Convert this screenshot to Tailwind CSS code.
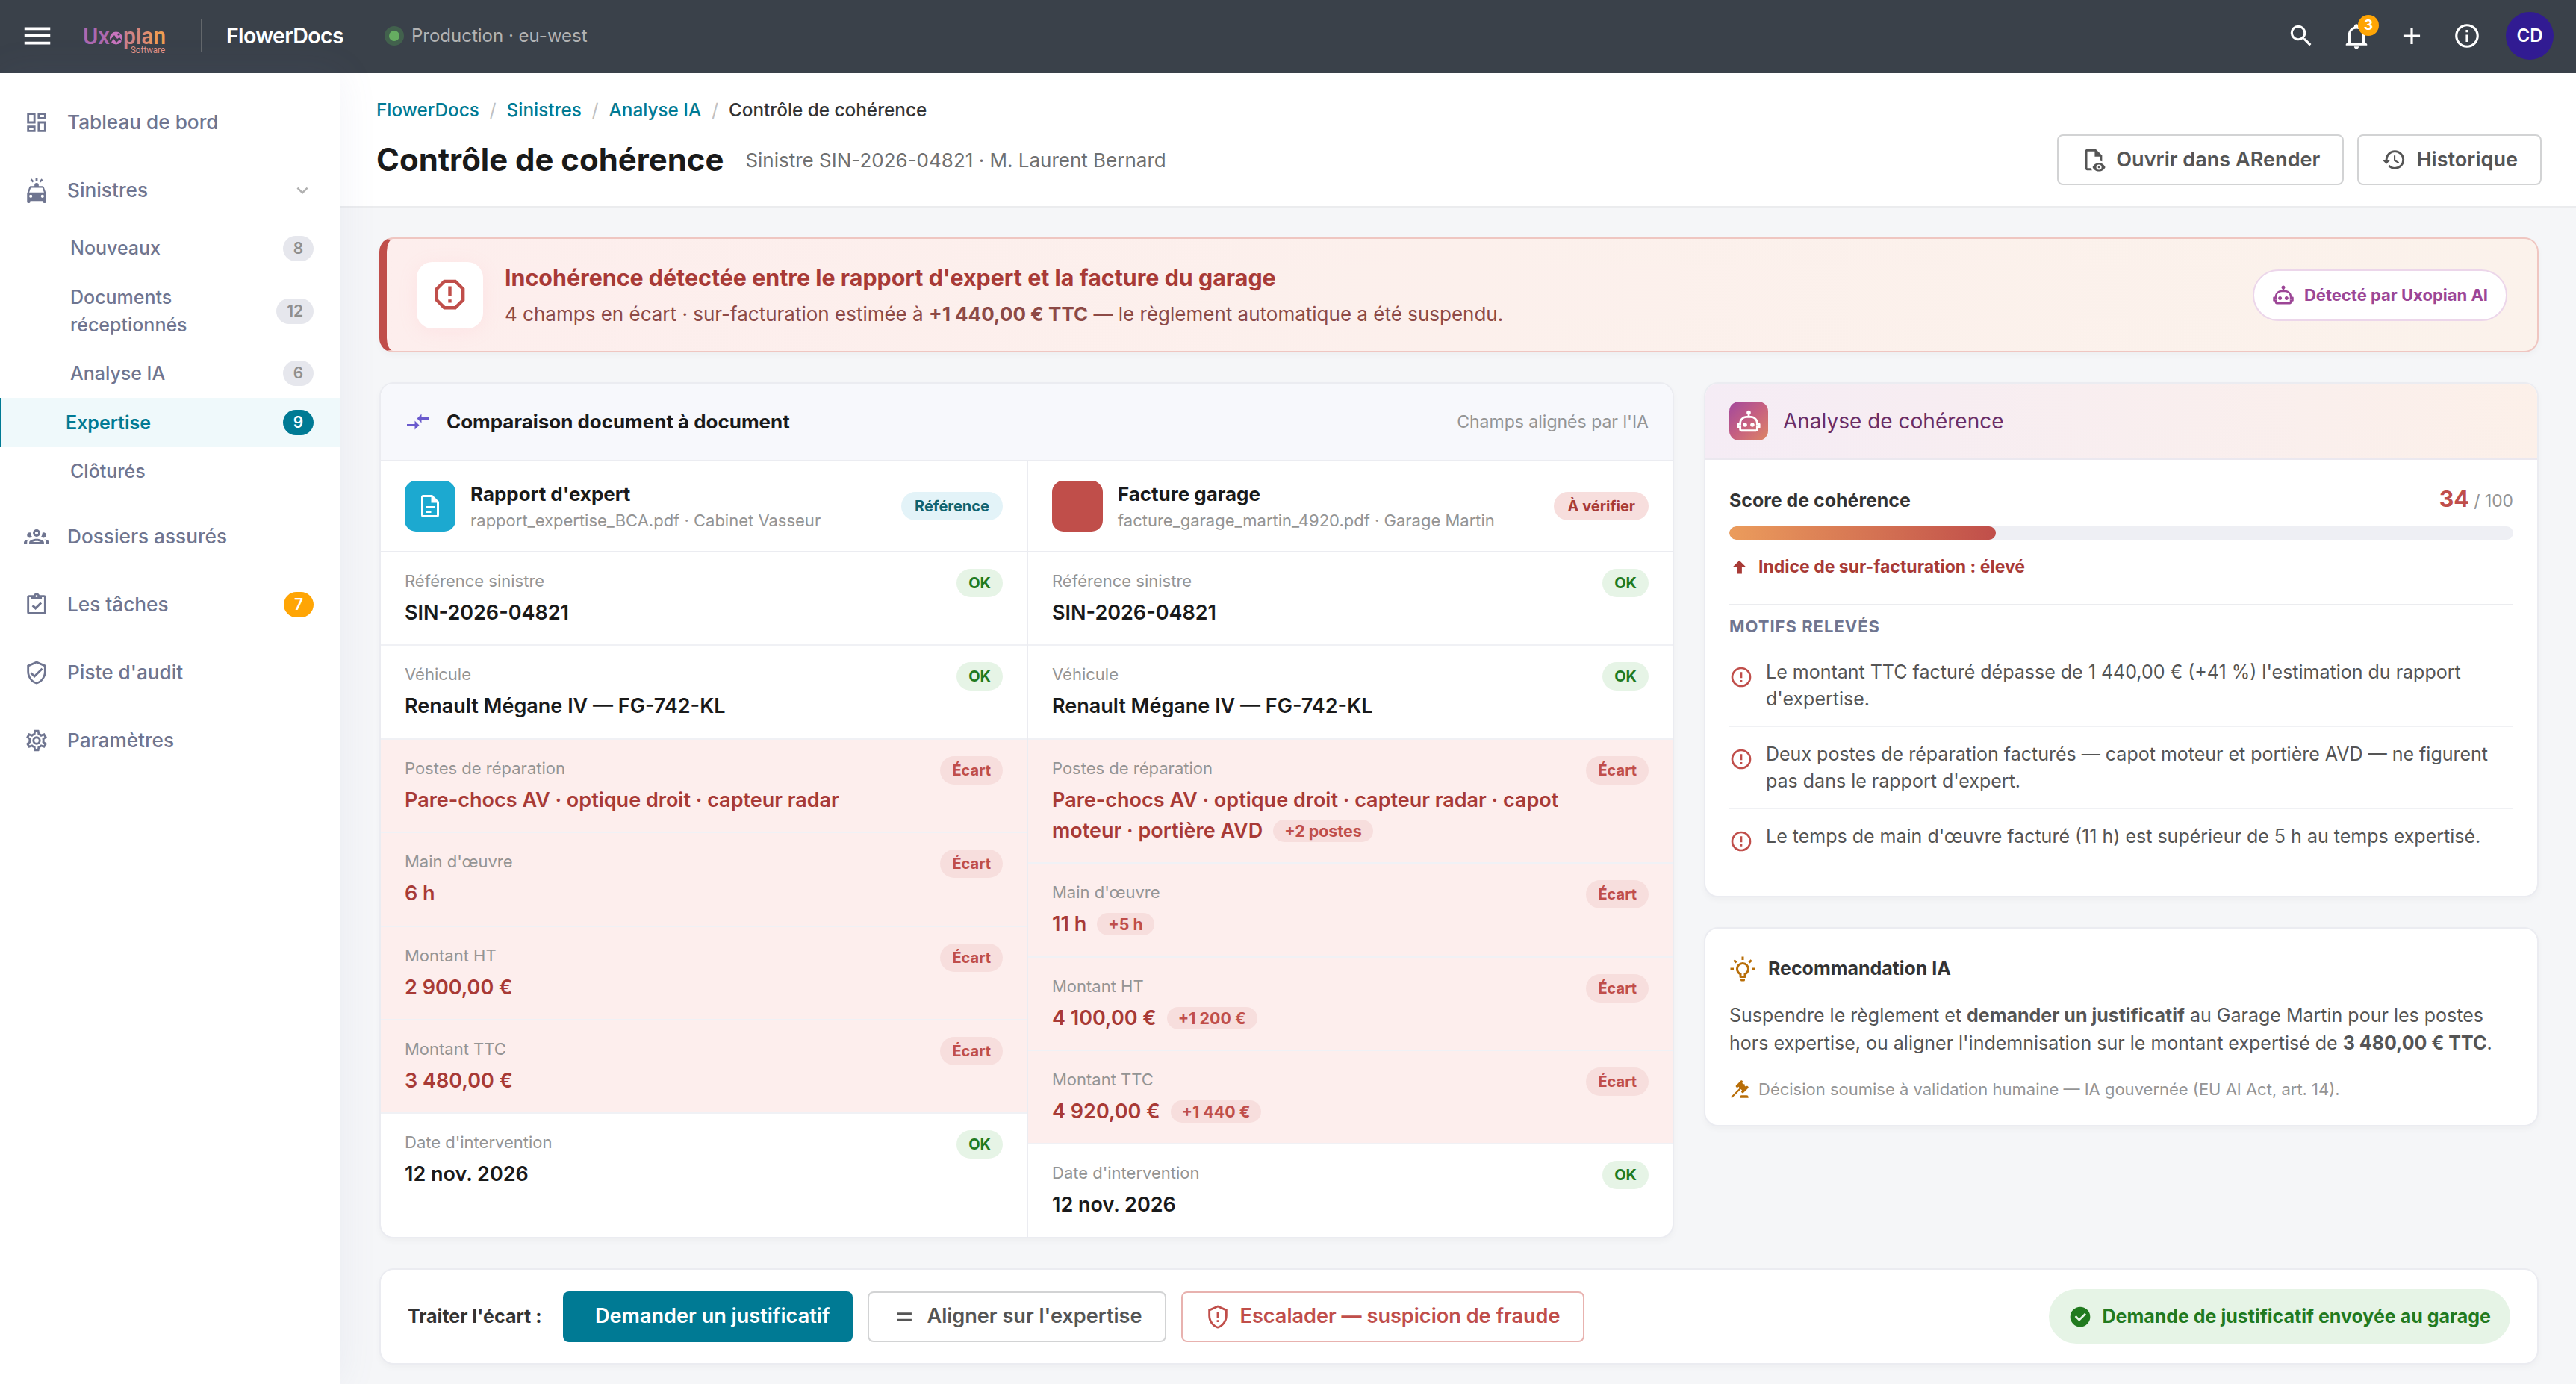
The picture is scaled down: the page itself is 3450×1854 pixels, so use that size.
<!DOCTYPE html>
<html lang="fr">
<head>
    <meta charset="UTF-8">
    <meta name="viewport" content="width=device-width, initial-scale=1.0">
    <title>Contrôle de cohérence - FlowerDocs</title>
    <script src="https://cdn.jsdelivr.net/npm/@tailwindcss/browser@4"></script>
</head>
<body class="h-[1854px] overflow-hidden bg-[#f5f6f8] font-['Inter',sans-serif] text-[24.7px] text-[#1a1a1a] antialiased">

    <!-- Icônes partagées -->
    <svg class="hidden">
        <symbol id="menu" viewBox="0 0 24 24"><path d="M3,6H21V8H3V6M3,11H21V13H3V11M3,16H21V18H3V16Z"/></symbol>
        <symbol id="magnify" viewBox="0 0 24 24"><path d="M9.5,3A6.5,6.5 0 0,1 16,9.5C16,11.11 15.41,12.59 14.44,13.73L14.71,14H15.5L20.5,19L19,20.5L14,15.5V14.71L13.73,14.44C12.59,15.41 11.11,16 9.5,16A6.5,6.5 0 0,1 3,9.5A6.5,6.5 0 0,1 9.5,3M9.5,5C7,5 5,7 5,9.5C5,12 7,14 9.5,14C12,14 14,12 14,9.5C14,7 12,5 9.5,5Z"/></symbol>
        <symbol id="bell" viewBox="0 0 24 24"><path d="M10 21H14C14 22.1 13.1 23 12 23S10 22.1 10 21M21 19V20H3V19L5 17V11C5 7.9 7 5.2 10 4.3V4C10 2.9 10.9 2 12 2S14 2.9 14 4V4.3C17 5.2 19 7.9 19 11V17L21 19M17 11C17 8.2 14.8 6 12 6S7 8.2 7 11V18H17V11Z"/></symbol>
        <symbol id="plus" viewBox="0 0 24 24"><path d="M19,13H13V19H11V13H5V11H11V5H13V11H19V13Z"/></symbol>
        <symbol id="info" viewBox="0 0 24 24"><path d="M11,9H13V7H11M12,20C7.59,20 4,16.41 4,12C4,7.59 7.59,4 12,4C16.41,4 20,7.59 20,12C20,16.41 16.41,20 12,20M12,2A10,10 0 0,0 2,12A10,10 0 0,0 12,22A10,10 0 0,0 22,12A10,10 0 0,0 12,2M11,17H13V11H11V17Z"/></symbol>
        <symbol id="dashboard" viewBox="0 0 24 24"><path d="M19,5V7H15V5H19M9,5V11H5V5H9M19,13V19H15V13H19M9,17V19H5V17H9M21,3H13V9H21V3M11,3H3V13H11V3M21,11H13V21H21V11M11,15H3V21H11V15Z"/></symbol>
        <symbol id="car" viewBox="0 0 24 24"><path fill-rule="evenodd" d="M18.92,9C18.72,8.42 18.16,8 17.5,8H14V7A2,2 0 0,0 10,7V8H6.5C5.84,8 5.28,8.42 5.08,9L3,15V23A1,1 0 0,0 4,24H5A1,1 0 0,0 6,23V22H18V23A1,1 0 0,0 19,24H20A1,1 0 0,0 21,23V15L18.92,9M6.5,19A1.5,1.5 0 0,1 5,17.5A1.5,1.5 0 0,1 6.5,16A1.5,1.5 0 0,1 8,17.5A1.5,1.5 0 0,1 6.5,19M17.5,19A1.5,1.5 0 0,1 16,17.5A1.5,1.5 0 0,1 17.5,16A1.5,1.5 0 0,1 19,17.5A1.5,1.5 0 0,1 17.5,19M5,14L6.5,9.5H17.5L19,14H5M11,0H13V3H11V0M7.2,0.9L9.4,3.1L8.3,4.6L6.1,2.4L7.2,0.9M16.8,0.9L17.9,2.4L15.7,4.6L14.6,3.1L16.8,0.9Z"/></symbol>
        <symbol id="group" viewBox="0 0 24 24"><path d="M12,5A3.5,3.5 0 0,0 8.5,8.5A3.5,3.5 0 0,0 12,12A3.5,3.5 0 0,0 15.5,8.5A3.5,3.5 0 0,0 12,5M12,7A1.5,1.5 0 0,1 13.5,8.5A1.5,1.5 0 0,1 12,10A1.5,1.5 0 0,1 10.5,8.5A1.5,1.5 0 0,1 12,7M5.5,8A2.5,2.5 0 0,0 3,10.5C3,11.44 3.53,12.25 4.29,12.68C4.65,12.88 5.06,13 5.5,13C5.94,13 6.35,12.88 6.71,12.68C7.08,12.47 7.39,12.17 7.62,11.81C6.89,10.86 6.5,9.7 6.5,8.5C6.5,8.41 6.5,8.31 6.5,8.22C6.2,8.08 5.86,8 5.5,8M18.5,8C18.14,8 17.8,8.08 17.5,8.22C17.5,8.31 17.5,8.41 17.5,8.5C17.5,9.7 17.11,10.86 16.38,11.81C16.5,12 16.63,12.15 16.78,12.3C16.94,12.45 17.1,12.58 17.29,12.68C17.65,12.88 18.06,13 18.5,13C18.94,13 19.35,12.88 19.71,12.68C20.47,12.25 21,11.44 21,10.5A2.5,2.5 0 0,0 18.5,8M12,14C9.66,14 5,15.17 5,17.5V19H19V17.5C19,15.17 14.34,14 12,14M4.71,14.55C2.78,14.78 0,15.76 0,17.5V19H3V17.07C3,16.06 3.69,15.22 4.71,14.55M19.29,14.55C20.31,15.22 21,16.06 21,17.07V19H24V17.5C24,15.76 21.22,14.78 19.29,14.55M12,16C13.53,16 15.24,16.5 16.23,17H7.77C8.76,16.5 10.47,16 12,16Z"/></symbol>
        <symbol id="clipboard" viewBox="0 0 24 24"><path d="M19,3H14.82C14.4,1.84 13.3,1 12,1C10.7,1 9.6,1.84 9.18,3H5A2,2 0 0,0 3,5V19A2,2 0 0,0 5,21H19A2,2 0 0,0 21,19V5A2,2 0 0,0 19,3M12,3A1,1 0 0,1 13,4A1,1 0 0,1 12,5A1,1 0 0,1 11,4A1,1 0 0,1 12,3M7,7H17V5H19V19H5V5H7V7M7.5,13.5L9,12L11,14L15.5,9.5L17,11L11,17L7.5,13.5Z"/></symbol>
        <symbol id="shield-check" viewBox="0 0 24 24"><path d="M21,11C21,16.55 17.16,21.74 12,23C6.84,21.74 3,16.55 3,11V5L12,1L21,5V11M12,21C15.75,20 19,15.54 19,11.22V6.3L12,3.18L5,6.3V11.22C5,15.54 8.25,20 12,21M10,17L6,13L7.41,11.59L10,14.17L16.59,7.58L18,9"/></symbol>
        <symbol id="cog" viewBox="0 0 24 24"><path d="M12,8A4,4 0 0,1 16,12A4,4 0 0,1 12,16A4,4 0 0,1 8,12A4,4 0 0,1 12,8M12,10A2,2 0 0,0 10,12A2,2 0 0,0 12,14A2,2 0 0,0 14,12A2,2 0 0,0 12,10M10,22C9.75,22 9.54,21.82 9.5,21.58L9.13,18.93C8.5,18.68 7.96,18.34 7.44,17.94L4.95,18.95C4.73,19.03 4.46,18.95 4.34,18.73L2.34,15.27C2.21,15.05 2.27,14.78 2.46,14.63L4.57,12.97L4.5,12L4.57,11L2.46,9.37C2.27,9.22 2.21,8.95 2.34,8.73L4.34,5.27C4.46,5.05 4.73,4.96 4.95,5.05L7.44,6.05C7.96,5.66 8.5,5.32 9.13,5.07L9.5,2.42C9.54,2.18 9.75,2 10,2H14C14.25,2 14.46,2.18 14.5,2.42L14.87,5.07C15.5,5.32 16.04,5.66 16.56,6.05L19.05,5.05C19.27,4.96 19.54,5.05 19.66,5.27L21.66,8.73C21.79,8.95 21.73,9.22 21.54,9.37L19.43,11L19.5,12L19.43,13L21.54,14.63C21.73,14.78 21.79,15.05 21.66,15.27L19.66,18.73C19.54,18.95 19.27,19.04 19.05,18.95L16.56,17.95C16.04,18.34 15.5,18.68 14.87,18.93L14.5,21.58C14.46,21.82 14.25,22 14,22H10M11.25,4L10.88,6.61C9.68,6.86 8.62,7.5 7.85,8.39L5.44,7.35L4.69,8.65L6.8,10.2C6.4,11.37 6.4,12.64 6.8,13.8L4.68,15.36L5.43,16.66L7.86,15.62C8.63,16.5 9.68,17.14 10.87,17.38L11.24,20H12.76L13.13,17.39C14.32,17.14 15.37,16.5 16.14,15.62L18.57,16.66L19.32,15.36L17.2,13.81C17.6,12.64 17.6,11.37 17.2,10.2L19.31,8.65L18.56,7.35L16.15,8.39C15.38,7.5 14.32,6.86 13.12,6.62L12.75,4H11.25Z"/></symbol>
        <symbol id="chevron" viewBox="0 0 24 24"><path d="M7.41,8.58L12,13.17L16.59,8.58L18,10L12,16L6,10L7.41,8.58Z"/></symbol>
        <symbol id="file-eye" viewBox="0 0 24 24"><path d="M17,18C17.56,18 18,18.44 18,19C18,19.56 17.56,20 17,20C16.44,20 16,19.56 16,19C16,18.44 16.44,18 17,18M17,15C14.27,15 11.94,16.66 11,19C11.94,21.34 14.27,23 17,23C19.73,23 22.06,21.34 23,19C22.06,16.66 19.73,15 17,15M17,21.5A2.5,2.5 0 0,1 14.5,19A2.5,2.5 0 0,1 17,16.5A2.5,2.5 0 0,1 19.5,19A2.5,2.5 0 0,1 17,21.5M9.27,20H6V4H13V9H18V13.07C18.7,13.15 19.36,13.32 20,13.56V8L14,2H6A2,2 0 0,0 4,4V20A2,2 0 0,0 6,22H10.5C10,21.41 9.59,20.73 9.27,20Z"/></symbol>
        <symbol id="history" viewBox="0 0 24 24"><path d="M13.5,8H12V13L16.28,15.54L17,14.33L13.5,12.25V8M13,3A9,9 0 0,0 4,12H1L4.96,16.03L9,12H6A7,7 0 0,1 13,5A7,7 0 0,1 20,12A7,7 0 0,1 13,19C11.07,19 9.32,18.21 8.06,16.94L6.64,18.36C8.27,20 10.5,21 13,21A9,9 0 0,0 22,12A9,9 0 0,0 13,3"/></symbol>
        <symbol id="octagon" viewBox="0 0 24 24"><path d="M8.27,3L3,8.27V15.73L8.27,21H15.73C17.5,19.24 21,15.73 21,15.73V8.27L15.73,3M9.1,5H14.9L19,9.1V14.9L14.9,19H9.1L5,14.9V9.1M11,15H13V17H11V15M11,7H13V13H11V7"/></symbol>
        <symbol id="robot" viewBox="0 0 24 24"><path d="M17.5 15.5C17.5 16.61 16.61 17.5 15.5 17.5S13.5 16.61 13.5 15.5 14.4 13.5 15.5 13.5 17.5 14.4 17.5 15.5M8.5 13.5C7.4 13.5 6.5 14.4 6.5 15.5S7.4 17.5 8.5 17.5 10.5 16.61 10.5 15.5 9.61 13.5 8.5 13.5M23 15V18C23 18.55 22.55 19 22 19H21V20C21 21.11 20.11 22 19 22H5C3.9 22 3 21.11 3 20V19H2C1.45 19 1 18.55 1 18V15C1 14.45 1.45 14 2 14H3C3 10.13 6.13 7 10 7H11V5.73C10.4 5.39 10 4.74 10 4C10 2.9 10.9 2 12 2S14 2.9 14 4C14 4.74 13.6 5.39 13 5.73V7H14C17.87 7 21 10.13 21 14H22C22.55 14 23 14.45 23 15M21 16H19V14C19 11.24 16.76 9 14 9H10C7.24 9 5 11.24 5 14V16H3V17H5V20H19V17H21V16Z"/></symbol>
        <symbol id="compare" viewBox="0 0 24 24"><path d="M9,14H2V16H9V19L13,15L9,11V14M15,13V10H22V8H15V5L11,9L15,13Z"/></symbol>
        <symbol id="document" viewBox="0 0 24 24"><path d="M6,2A2,2 0 0,0 4,4V20A2,2 0 0,0 6,22H18A2,2 0 0,0 20,20V8L14,2H6M6,4H13V9H18V20H6V4M8,12V14H16V12H8M8,16V18H13V16H8Z"/></symbol>
        <symbol id="arrow-up" viewBox="0 0 24 24"><path d="M15,20H9V12H4.16L12,4.16L19.84,12H15V20Z"/></symbol>
        <symbol id="alert" viewBox="0 0 24 24"><path d="M11,15H13V17H11V15M11,7H13V13H11V7M12,2C6.47,2 2,6.5 2,12A10,10 0 0,0 12,22A10,10 0 0,0 22,12A10,10 0 0,0 12,2M12,20A8,8 0 0,1 4,12A8,8 0 0,1 12,4A8,8 0 0,1 20,12A8,8 0 0,1 12,20Z"/></symbol>
        <symbol id="bulb" viewBox="0 0 24 24"><path d="M20,11H23V13H20V11M1,11H4V13H1V11M13,1V4H11V1H13M4.92,3.5L7.05,5.64L5.63,7.05L3.5,4.93L4.92,3.5M16.95,5.63L19.07,3.5L20.5,4.93L18.37,7.05L16.95,5.63M12,6A6,6 0 0,1 18,12C18,14.22 16.79,16.16 15,17.2V19A1,1 0 0,1 14,20H10A1,1 0 0,1 9,19V17.2C7.21,16.16 6,14.22 6,12A6,6 0 0,1 12,6M14,21V22A1,1 0 0,1 13,23H11A1,1 0 0,1 10,22V21H14M11,18H13V15.87C14.73,15.43 16,13.86 16,12A4,4 0 0,0 12,8A4,4 0 0,0 8,12C8,13.86 9.27,15.43 11,15.87V18Z"/></symbol>
        <symbol id="gavel" viewBox="0 0 24 24"><path d="M2.3,20.28L11.9,10.68L10.5,9.26L9.78,9.97C9.39,10.36 8.76,10.36 8.37,9.97L7.66,9.26C7.27,8.87 7.27,8.24 7.66,7.85L13.32,2.19C13.71,1.8 14.34,1.8 14.73,2.19L15.44,2.9C15.83,3.29 15.83,3.92 15.44,4.31L14.73,5L16.15,6.43C16.54,6.04 17.17,6.04 17.56,6.43C17.95,6.82 17.95,7.46 17.56,7.85L18.97,9.26L19.68,8.55C20.07,8.16 20.71,8.16 21.1,8.55L21.8,9.26C22.19,9.65 22.19,10.29 21.8,10.68L16.15,16.33C15.76,16.72 15.12,16.72 14.73,16.33L14.03,15.63C13.63,15.24 13.63,14.6 14.03,14.21L14.73,13.5L13.32,12.09L3.71,21.7C3.32,22.09 2.69,22.09 2.3,21.7C1.91,21.31 1.91,20.67 2.3,20.28M20,19A2,2 0 0,1 22,21V22H12V21A2,2 0 0,1 14,19H20Z"/></symbol>
        <symbol id="equal" viewBox="0 0 24 24"><path d="M19,10H5V8H19V10M19,16H5V14H19V16Z"/></symbol>
        <symbol id="shield-alert" viewBox="0 0 24 24"><path d="M21,11C21,16.5 17.2,21.7 12,23C6.8,21.7 3,16.5 3,11V5L12,1L21,5V11M12,21C15.7,20 19,15.5 19,11.2V6.3L12,3.2L5,6.3V11.2C5,15.5 8.3,20 12,21M11,7H13V13H11V7M11,15H13V17H11V15Z"/></symbol>
        <symbol id="check-circle" viewBox="0 0 24 24"><path d="M12,2A10,10 0 0,1 22,12A10,10 0 0,1 12,22A10,10 0 0,1 2,12A10,10 0 0,1 12,2M11,16.5L18,9.5L16.59,8.09L11,13.67L7.91,10.59L6.5,12L11,16.5Z"/></symbol>
    </svg>

    <!-- Barre supérieure -->
    <header class="flex h-[98px] items-center bg-[#3a414a] pb-0.5 pl-[27px] pr-[30px] text-white">
        <svg class="size-[46px] fill-current"><use href="#menu"/></svg>
        <svg class="ml-[38px] h-[52px] w-[114px] overflow-visible" viewBox="0 0 114 52">
            <defs>
                <linearGradient id="brand" gradientUnits="userSpaceOnUse" x1="55" x2="112" y1="0" y2="0">
                    <stop offset="0" stop-color="#c9808f"/>
                    <stop offset="0.5" stop-color="#dc8a76"/>
                    <stop offset="0.7" stop-color="#ec9a58"/>
                    <stop offset="1" stop-color="#f0a050"/>
                </linearGradient>
            </defs>
            <g font-family="Roboto, sans-serif">
                <text x="0" y="37" font-size="32" font-weight="500" fill="#ac68b0" textLength="36" lengthAdjust="spacingAndGlyphs">Ux</text>
                <text x="54" y="37" font-size="32" font-weight="500" fill="url(#brand)" textLength="57" lengthAdjust="spacingAndGlyphs">pian</text>
                <text x="64" y="48.500" font-size="12.500" fill="#e39388" textLength="46" lengthAdjust="spacingAndGlyphs">Software</text>
            </g>
            <circle cx="44.500" cy="29" r="8.500" fill="#c774bd"/>
            <path d="M36 32L42 25L46 30L49 28L53 33L48.500 31.500L45 35L41 30L37 36Z" fill="#3a414a"/>
            <circle cx="48" cy="24" r="1.600" fill="#3a414a"/>
        </svg>
        <div class="ml-[44px] h-[44px] w-0.5 bg-[#63676b]"></div>
        <div class="ml-[32px] w-[157px] whitespace-nowrap text-[28.5px] font-semibold tracking-[-0.65px]">FlowerDocs</div>
        <div class="ml-[61px] size-[14px] rounded-full bg-[#66ad61] ring-[6px] ring-[#42614d]"></div>
        <div class="ml-[16px] text-[24px] text-[#b3b3b3]">Production · eu-west</div>
        <div class="ml-auto flex items-center">
            <div class="flex w-[74px] justify-center"><svg class="size-[38px] fill-current"><use href="#magnify"/></svg></div>
            <div class="relative flex w-[74px] justify-center">
                <svg class="size-[38px] fill-current"><use href="#bell"/></svg>
                <span class="absolute -top-[9px] right-[7px] flex size-[28px] items-center justify-center rounded-full bg-[#ffa505] text-[19px] font-bold">3</span>
            </div>
            <div class="flex w-[74px] justify-center"><svg class="size-[38px] fill-current"><use href="#plus"/></svg></div>
            <div class="flex w-[74px] justify-center"><svg class="size-[38px] fill-current"><use href="#info"/></svg></div>
            <div class="ml-[15px] flex size-[64px] items-center justify-center rounded-full bg-[#311b92] text-[24px] font-semibold">CD</div>
        </div>
    </header>

    <div class="flex h-[1756px]">
        <!-- Navigation -->
        <nav class="relative z-10 w-[456px] shrink-0 bg-white pt-[20px] font-medium text-[#6f7590] shadow-[0_0_50px_rgba(113,122,174,0.09)]">
            <a class="flex h-[91px] items-center pl-[32px] text-[26.2px]"><svg class="mr-[24px] size-[34px] fill-current"><use href="#dashboard"/></svg>Tableau de bord</a>
            <a class="flex h-[91px] items-center pl-[32px] pr-[36px] text-[26.2px]"><svg class="mr-[24px] size-[34px] fill-current"><use href="#car"/></svg>Sinistres<svg class="ml-auto size-[30px] fill-[#b0b0b0]"><use href="#chevron"/></svg></a>
            <div class="mb-[9px] text-[25px] leading-[37px]">
                <a class="flex items-center justify-between py-[14.2px] pl-[94px] pr-[36px]">Nouveaux<span class="rounded-full bg-[#e6e7ed] px-[14px] text-[20.9px] font-semibold leading-[34px] text-[#8f8f8f]">8</span></a>
                <a class="flex items-center justify-between py-[14.2px] pl-[94px] pr-[36px]"><span class="w-[190px]">Documents réceptionnés</span><span class="rounded-full bg-[#e6e7ed] px-[14px] text-[20.9px] font-semibold leading-[34px] text-[#8f8f8f]">12</span></a>
                <a class="flex items-center justify-between py-[14.2px] pl-[94px] pr-[36px]">Analyse IA<span class="rounded-full bg-[#e6e7ed] px-[14px] text-[20.9px] font-semibold leading-[34px] text-[#8f8f8f]">6</span></a>
                <a class="flex items-center justify-between border-l-2 border-[#007a94] bg-[#eff9fb] py-[14.5px] pl-[86px] pr-[36px] font-semibold text-[#007a94]">Expertise<span class="rounded-full bg-[#007a94] px-[14px] text-[20.9px] font-semibold leading-[34px] text-white">9</span></a>
                <a class="flex items-center justify-between py-[14.2px] pl-[94px] pr-[36px]">Clôturés</a>
            </div>
            <a class="flex h-[91px] items-center pl-[32px] text-[26.2px]"><svg class="mr-[24px] size-[34px] fill-current"><use href="#group"/></svg>Dossiers assurés</a>
            <a class="flex h-[91px] items-center pl-[32px] pr-[36px] text-[26.2px]"><svg class="mr-[24px] size-[34px] fill-current"><use href="#clipboard"/></svg>Les tâches<span class="ml-auto rounded-full bg-[#ffa505] px-[14px] text-[20.9px] font-semibold leading-[34px] text-white">7</span></a>
            <a class="flex h-[91px] items-center pl-[32px] text-[26.2px]"><svg class="mr-[24px] size-[34px] fill-current"><use href="#shield-check"/></svg>Piste d'audit</a>
            <a class="flex h-[91px] items-center pl-[32px] text-[26.2px]"><svg class="mr-[24px] size-[34px] fill-current"><use href="#cog"/></svg>Paramètres</a>
        </nav>

        <main class="flex-1">
            <!-- En-tête de page -->
            <div class="h-[180px] border-b-2 border-[#ebecee] bg-white pl-[48px] pr-[46px] pt-[31px]">
                <div class="flex gap-[14px] text-[24.3px] leading-[37px] font-medium text-[#007a94]">
                    <span>FlowerDocs</span><span class="font-normal text-[#c0c0c0]">/</span><span>Sinistres</span><span class="font-normal text-[#c0c0c0]">/</span><span>Analyse IA</span><span class="font-normal text-[#c0c0c0]">/</span><span class="text-[#333]">Contrôle de cohérence</span>
                </div>
                <div class="mt-[14px] flex h-[68px] items-center">
                    <h1 class="text-[41.9px] font-bold">Contrôle de cohérence</h1>
                    <span class="ml-[29px] text-[26px] text-[#707070]">Sinistre SIN-2026-04821 · M. Laurent Bernard</span>
                    <button class="ml-auto flex h-[68px] items-center gap-[13px] rounded-[8px] border-2 border-[#d2d3d4] px-[30px] text-[27.1px] font-semibold text-[#555]"><svg class="size-[34px] fill-current"><use href="#file-eye"/></svg>Ouvrir dans ARender</button>
                    <button class="ml-[18px] flex h-[68px] items-center gap-[13px] rounded-[8px] border-2 border-[#d2d3d4] px-[30px] text-[27.1px] font-semibold text-[#555]"><svg class="size-[34px] fill-current"><use href="#history"/></svg>Historique</button>
                </div>
            </div>

            <div class="flex flex-col gap-[40px] pl-[52px] pr-[50px] pt-[40px]">
                <!-- Bandeau d'alerte -->
                <section class="flex h-[154px] items-center rounded-[19px] border-2 border-l-[10px] border-[#efc6c1] border-l-[#c04e4a] bg-linear-to-r from-[#fdeeed] to-[#fbf2eb] pl-[40px] pr-[40px] shadow-[0_4px_8px_rgba(0,0,0,0.03)]">
                    <div class="flex size-[89px] items-center justify-center rounded-[21px] bg-white shadow-[0_4px_26px_rgba(255,160,170,0.12)]"><svg class="mb-[2px] size-[53px] fill-[#c04e4a]"><use href="#octagon"/></svg></div>
                    <div class="ml-[29px]">
                        <h2 class="text-[30.4px] font-bold leading-[45px] text-[#a83a36]">Incohérence détectée entre le rapport d'expert et la facture du garage</h2>
                        <p class="mt-[5px] text-[26px] leading-[41px] text-[#8d4a46]">4 champs en écart · sur-facturation estimée à <b>+1 440,00 € TTC</b> — le règlement automatique a été suspendu.</p>
                    </div>
                    <div class="ml-auto flex h-[69px] items-center gap-[13px] rounded-full border-2 border-[#ecd6ea] bg-white px-[24px] text-[22px] font-bold text-[#9c4696]"><svg class="size-[30px] fill-current"><use href="#robot"/></svg>Détecté par Uxopian AI</div>
                </section>

                <div class="grid grid-cols-[1734px_1118px] items-start justify-between">
                    <!-- Comparaison -->
                    <section class="h-[1147px] overflow-hidden rounded-[19px] border-2 border-[#ebecf1] bg-white shadow-[0_4px_8px_rgba(0,0,0,0.03)]">
                        <div class="flex h-[104px] items-center border-b-2 border-[#ebecf1] bg-[#f7f8fc] px-[32px]">
                            <svg class="size-[36px] fill-[#6a5acd]"><use href="#compare"/></svg>
                            <h3 class="ml-[20px] text-[25.95px] font-bold">Comparaison document à document</h3>
                            <span class="ml-auto text-[23px] text-[#949494]">Champs alignés par l'IA</span>
                        </div>
                        <div class="grid h-full grid-cols-[867px_1fr]">
                            <div class="border-r-2 border-[#ebecf1]">
                                <div class="flex h-[122px] items-center border-b-2 border-[#ebecf1] px-[32px]">
                                    <div class="flex size-[68px] items-center justify-center rounded-[15px] bg-[#1ca9d0]"><svg class="size-[36px] fill-white"><use href="#document"/></svg></div>
                                    <div class="ml-[20px] mt-px">
                                        <div class="text-[25.95px] font-bold leading-[36px]">Rapport d'expert</div>
                                        <div class="text-[22px] leading-[34px] text-[#949494]">rapport_expertise_BCA.pdf · Cabinet Vasseur</div>
                                    </div>
                                    <span class="ml-auto rounded-full bg-[#e3f3f8] px-[18px] text-[20px] font-bold leading-[38px] text-[#0f6370]">Référence</span>
                                </div>
                                <div id="expert"></div>
                            </div>
                            <div>
                                <div class="flex h-[122px] items-center border-b-2 border-[#ebecf1] px-[32px]">
                                    <div class="size-[68px] rounded-[15px] bg-[#c04e4a]"></div>
                                    <div class="ml-[20px] mt-px">
                                        <div class="text-[25.95px] font-bold leading-[36px]">Facture garage</div>
                                        <div class="text-[22px] leading-[34px] text-[#949494]">facture_garage_martin_4920.pdf · Garage Martin</div>
                                    </div>
                                    <span class="ml-auto rounded-full bg-[#f7dedd] px-[18px] text-[20px] font-bold leading-[38px] text-[#a83a36]">À vérifier</span>
                                </div>
                                <div id="facture"></div>
                            </div>
                        </div>
                    </section>

                    <div class="flex flex-col gap-[40px]">
                        <!-- Analyse -->
                        <section class="h-[690px] overflow-hidden rounded-[19px] border-2 border-[#ebecf1] bg-white shadow-[0_4px_8px_rgba(0,0,0,0.03)]">
                            <div class="flex h-[102px] items-center border-b-2 border-[#ebe8ef] bg-linear-to-r from-[#f5ecf5] to-[#fcf0e9] px-[32px]">
                                <div class="flex size-[52px] items-center justify-center rounded-[13px] bg-linear-to-br from-[#a3489c] via-[#c65f80] to-[#dd8562]"><svg class="size-[34px] fill-white"><use href="#robot"/></svg></div>
                                <h3 class="ml-[20px] text-[28px] text-[#6b2d66]">Analyse de cohérence</h3>
                            </div>
                            <div class="px-[32px] pt-[30px]">
                                <div class="flex h-[46px] items-baseline justify-between">
                                    <span class="text-[24.95px] font-bold text-[#333]">Score de cohérence</span>
                                    <span class="text-[22.8px] text-[#949494]"><b class="text-[30.4px] leading-[45px] text-[#c04e4a]">34</b> / 100</span>
                                </div>
                                <div class="mt-[13px] h-[18px] overflow-hidden rounded-full bg-[#eeeff4]">
                                    <div class="h-full w-[34%] rounded-full bg-linear-to-r from-[#eb9c5c] to-[#c04e4a]"></div>
                                </div>
                                <div class="mt-[19px] flex items-center gap-[12px] text-[23px] font-bold leading-[34px] text-[#a83a36]"><svg class="size-[27px] fill-current"><use href="#arrow-up"/></svg>Indice de sur-facturation : élevé</div>
                                <h4 class="mt-[33px] border-t-2 border-[#ebecef] pt-[12px] text-[22px] font-bold leading-[33px] tracking-[1px] text-[#6f7590]">MOTIFS RELEVÉS</h4>
                                <ul class="mt-[8px] text-[25px] leading-[36px] text-[#555]">
                                    <li class="flex gap-[17px] border-b-2 border-[#f0f1f4] py-[18px]"><svg class="mt-[9px] size-[32px] shrink-0 fill-[#c04e4a]"><use href="#alert"/></svg><span>Le montant TTC facturé dépasse de 1 440,00 € (+41 %) l'estimation du rapport d'expertise.</span></li>
                                    <li class="flex gap-[17px] border-b-2 border-[#f0f1f4] py-[18px]"><svg class="mt-[9px] size-[32px] shrink-0 fill-[#c04e4a]"><use href="#alert"/></svg><span>Deux postes de réparation facturés — capot moteur et portière AVD — ne figurent pas dans le rapport d'expert.</span></li>
                                    <li class="flex gap-[17px] py-[18px]"><svg class="mt-[9px] size-[32px] shrink-0 fill-[#c04e4a]"><use href="#alert"/></svg><span>Le temps de main d'œuvre facturé (11 h) est supérieur de 5 h au temps expertisé.</span></li>
                                </ul>
                            </div>
                        </section>

                        <!-- Recommandation -->
                        <section class="h-[267px] rounded-[19px] border-2 border-[#ebecf1] bg-white px-[32px] pt-[36px] shadow-[0_4px_8px_rgba(0,0,0,0.03)]">
                            <h3 class="flex h-[36px] items-center gap-[16px] text-[24.95px] font-bold text-[#333]"><svg class="size-[36px] fill-[#b86e08]"><use href="#bulb"/></svg>Recommandation IA</h3>
                            <p class="mt-[26px] text-[25px] leading-[37px] text-[#555]">Suspendre le règlement et <b>demander un justificatif</b> au Garage Martin pour les postes hors expertise, ou aligner l'indemnisation sur le montant expertisé de <b>3 480,00 € TTC</b>.</p>
                            <p class="mt-[26px] flex items-center gap-[11px] text-[22px] leading-[34px] text-[#949494]"><svg class="size-[28px] fill-[#b86e08]"><use href="#gavel"/></svg>Décision soumise à validation humaine — IA gouvernée (EU AI Act, art. 14).</p>
                        </section>
                    </div>
                </div>

                <!-- Actions -->
                <section class="flex h-[129px] items-center rounded-[19px] border-2 border-[#ebecf1] bg-white px-[36px] text-[27.1px] font-semibold shadow-[0_4px_8px_rgba(0,0,0,0.03)]">
                    <span class="w-[208px] text-[25px] font-bold text-[#333]">Traiter l'écart :</span>
                    <button class="flex h-[68px] items-center rounded-[8px] bg-[#007a94] pl-[43px] pr-[31px] text-white">Demander un justificatif</button>
                    <button class="ml-[20px] flex h-[68px] items-center gap-[13px] rounded-[8px] border-2 border-[#d2d3d4] px-[30px] text-[#555]"><svg class="size-[34px] fill-current"><use href="#equal"/></svg>Aligner sur l'expertise</button>
                    <button class="ml-[20px] flex h-[68px] items-center gap-[13px] rounded-[8px] border-2 border-[#e8b2af] px-[30px] text-[#c04e4a]"><svg class="size-[34px] fill-current"><use href="#shield-alert"/></svg>Escalader — suspicion de fraude</button>
                    <span class="ml-auto flex h-[73px] items-center gap-[13px] rounded-full bg-[#e6f4e6] px-[26px] text-[25px] font-bold text-[#217a1f]"><svg class="size-[32px] fill-current"><use href="#check-circle"/></svg>Demande de justificatif envoyée au garage</span>
                </section>
            </div>
        </main>
    </div>

    <script>
        // Champs extraits : [libellé, valeur, écart ?, différence]
        const expert = [
            ['Référence sinistre', 'SIN-2026-04821'],
            ['Véhicule', 'Renault Mégane IV — FG-742-KL'],
            ['Postes de réparation', 'Pare-chocs AV · optique droit · capteur radar', true],
            ["Main d'œuvre", '6 h', true],
            ['Montant HT', '2 900,00 €', true],
            ['Montant TTC', '3 480,00 €', true],
            ["Date d'intervention", '12 nov. 2026'],
        ];
        const facture = [
            ['Référence sinistre', 'SIN-2026-04821'],
            ['Véhicule', 'Renault Mégane IV — FG-742-KL'],
            ['Postes de réparation', 'Pare-chocs AV · optique droit · capteur radar · capot moteur · portière AVD', true, '+2 postes'],
            ["Main d'œuvre", '11 h', true, '+5 h'],
            ['Montant HT', '4 100,00 €', true, '+1 200 €'],
            ['Montant TTC', '4 920,00 €', true, '+1 440 €'],
            ["Date d'intervention", '12 nov. 2026'],
        ];

        function renderRows(id, rows) {
            document.getElementById(id).innerHTML = rows.map(([label, value, gap, diff], i) => `
                <div class="flex items-start justify-between px-[32px] pb-[22.4px] pt-[21px] ${i < rows.length - 1 ? 'border-b-2 border-[#f0f1f5]' : ''} ${gap ? 'bg-[#fdeeed]' : ''}">
                    <div>
                        <div class="text-[22px] leading-[34px] text-[#949494]">${label}</div>
                        <div class="mt-[5px] text-[27px] font-semibold leading-[41px] ${gap ? 'text-[#a83a36]' : ''}">${value}${diff ? `<span class="ml-[14px] inline-block rounded-full bg-[#f7dedd] px-[15px] align-[1px] text-[21.4px] font-bold leading-[30px] text-[#c04e4a]">${diff}</span>` : ''}</div>
                    </div>
                    ${gap
                        ? '<span class="mt-px shrink-0 rounded-full bg-[#f7dedd] px-[16px] text-[20px] font-bold leading-[38px] text-[#c04e4a]">Écart</span>'
                        : '<span class="mt-px shrink-0 rounded-full bg-[#e6f4e6] px-[16px] text-[20px] font-bold leading-[38px] text-[#217a1f]">OK</span>'}
                </div>
            `).join('');
        }

        renderRows('expert', expert);
        renderRows('facture', facture);
    </script>

</body>
</html>
